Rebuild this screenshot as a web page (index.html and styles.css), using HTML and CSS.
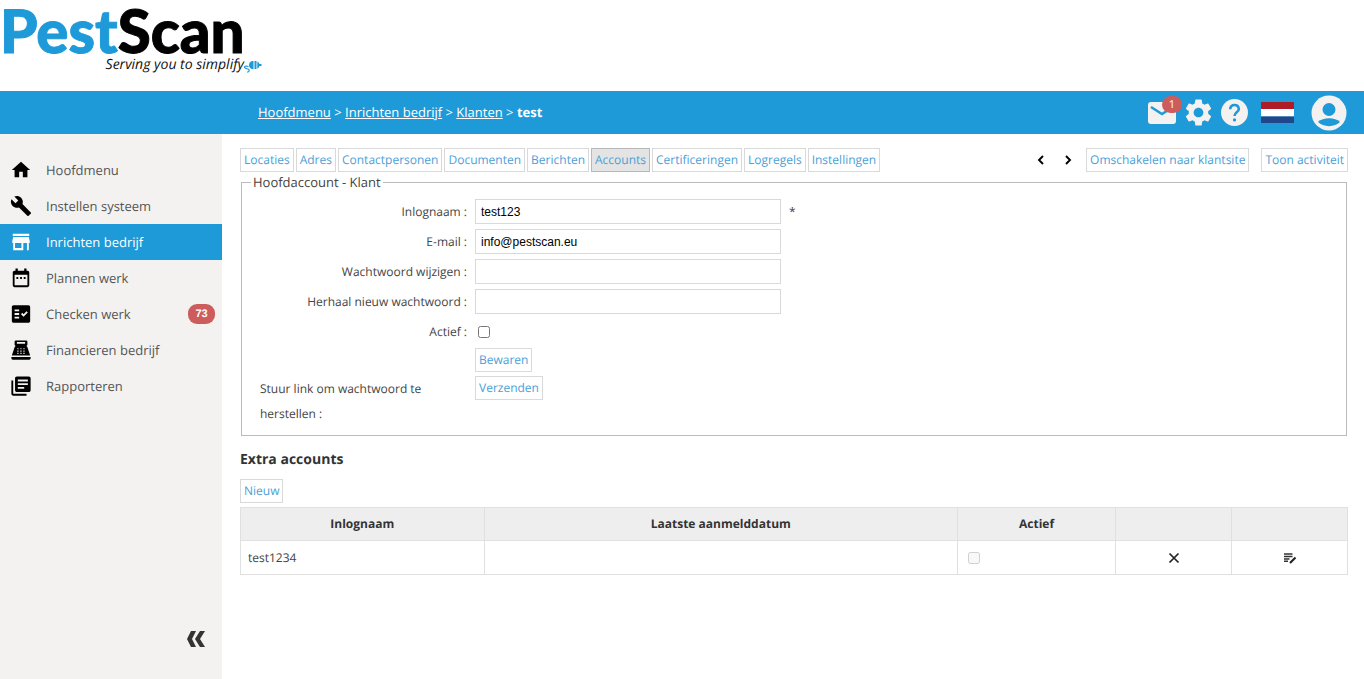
FILE: index.html
```html
<!DOCTYPE html>
<html lang="nl">
<head>
<meta charset="utf-8">
<title>PestScan - Accounts</title>
<link rel="stylesheet" href="styles.css">
</head>
<body>
<header class="masthead">
  <div class="logo">
    <div class="logo-name"><span class="logo-pest">Pest</span>Scan</div>
    <div class="logo-tagline">Serving you to simplify<svg class="plug" viewBox="0 0 18 14" width="18" height="14"><path d="M9.500 2H8Q5 3 5 6Q5 9 8 10H9.500ZM10.500 2h2v8h-2ZM13.300 2.500Q15 3 15.500 5h2v2h-2Q15 9 13.300 9.500Z" fill="#1e9ad9"/><path d="M4.500 7.500Q0 6.500 .7 8.700Q1.500 9.700 4 10Q6.500 11.500 4 13H3" fill="none" stroke="#1e9ad9" stroke-width="1.200"/></svg></div>
  </div>
</header>
<div class="topbar">
  <nav class="crumbs" aria-label="Kruimelpad"><a href="#">Hoofdmenu</a> &gt; <a href="#">Inrichten bedrijf</a> &gt; <a href="#">Klanten</a> &gt; <strong>test</strong></nav>
  <div class="tools">
    <button class="tool mail" aria-label="Berichten"><svg viewBox="0 0 28 22" width="28" height="22"><rect width="28" height="22" rx="3" fill="#f3f2f1"/><path d="M3 5l11 7 11-7" fill="none" stroke="#1e9ad9" stroke-width="2.400"/></svg><span class="mail-badge">1</span></button>
    <button class="tool gear" aria-label="Instellingen"><svg viewBox="2 2 20 20" width="27" height="27"><path fill="#f3f2f1" d="M19.14 12.94c.04-.3.06-.61.06-.94 0-.32-.02-.64-.07-.94l2.03-1.58c.18-.14.23-.41.12-.61l-1.92-3.32c-.12-.22-.37-.29-.59-.22l-2.39.96c-.5-.38-1.03-.7-1.62-.94l-.36-2.54c-.04-.24-.24-.41-.48-.41h-3.84c-.24 0-.43.17-.47.41l-.36 2.54c-.59.24-1.13.57-1.62.94l-2.39-.96c-.22-.08-.47 0-.59.22L2.74 8.87c-.12.21-.08.47.12.61l2.03 1.58c-.05.3-.09.63-.09.94s.02.64.07.94l-2.03 1.58c-.18.14-.23.41-.12.61l1.92 3.32c.12.22.37.29.59.22l2.39-.96c.5.38 1.03.7 1.62.94l.36 2.54c.05.24.24.41.48.41h3.84c.24 0 .44-.17.47-.41l.36-2.54c.59-.24 1.13-.56 1.62-.94l2.39.96c.22.08.47 0 .59-.22l1.92-3.32c.12-.22.07-.47-.12-.61l-2.01-1.58zM12 15.6c-1.98 0-3.6-1.62-3.6-3.6s1.62-3.6 3.6-3.6 3.6 1.62 3.6 3.6-1.62 3.6-3.6 3.6z"/></svg></button>
    <button class="tool help" aria-label="Help"><svg viewBox="2 2 20 20" width="27" height="27"><circle cx="12" cy="12" r="10" fill="#f3f2f1"/><path d="M8.800 9.600Q9 6.400 12 6.400T15.200 9.500C15.200 11.500 12 11.800 12 14.600" fill="none" stroke="#1e9ad9" stroke-width="1.900"/><circle cx="12" cy="17.500" r="1.200" fill="#1e9ad9"/></svg></button>
    <button class="tool flag" aria-label="Taal: Nederlands"><svg viewBox="0 0 33 21" width="33" height="21"><path d="M0 0h33v7H0z" fill="#ae1c28"/><path d="M0 7h33v7.500H0z" fill="#fff"/><path d="M0 14.500h33V21H0z" fill="#21468b"/></svg></button>
    <button class="tool" aria-label="Profiel"><svg viewBox="0 0 36 36" width="36" height="36"><circle cx="18" cy="18" r="17.500" fill="#f3f2f1"/><circle cx="18" cy="14.500" r="6.500" fill="#1e9ad9"/><path d="M7 27C12 22 24 22 29 27C24 32.500 12 32.500 7 27z" fill="#1e9ad9"/></svg></button>
  </div>
</div>
<div class="shell">
  <aside class="sidebar">
    <nav class="menu">
      <a class="item" href="#"><svg viewBox="0 0 24 24"><path d="M10 20v-6h4v6h5v-8h3L12 3 2 12h3v8z"/></svg>Hoofdmenu</a>
      <a class="item" href="#"><svg viewBox="0 0 24 24"><path d="M22.700 19l-9.100-9.100c.9-2.300.4-5-1.500-6.900-2-2-5-2.400-7.400-1.300L9 6 6 9 1.600 4.700C.4 7.100.9 10.100 2.900 12.100c1.900 1.900 4.600 2.400 6.900 1.500l9.100 9.100c.4.4 1 .4 1.400 0l2.300-2.300c.5-.4.5-1.100.1-1.400z"/></svg>Instellen systeem</a>
      <a class="item current" href="#"><svg viewBox="0 0 24 24"><path fill-rule="evenodd" d="M3 3h18v2.500H3zM21.500 13v-2L20.500 6.500H3.500L2.500 11v2h1v8h11v-8h4v8h2v-8zM12.500 18.500h-7V13h7z"/></svg>Inrichten bedrijf</a>
      <a class="item" href="#"><svg viewBox="0 0 24 24"><path d="M9 11H7v2h2v-2zm4 0h-2v2h2v-2zm4 0h-2v2h2v-2zM19 4h-1V1.500h-2.500V4h-7V1.500H6V4H5c-1.110 0-2 .9-2 2v14c0 1.100.89 2 2 2h14c1.100 0 2-.9 2-2V6c0-1.100-.9-2-2-2zm0 16H5V8.500h14V20z"/></svg>Plannen werk</a>
      <a class="item" href="#"><svg viewBox="0 0 24 24"><path fill-rule="evenodd" d="M20 2.500H4c-1.100 0-2 .9-2 2v15c0 1.100.9 2 2 2h16c1.100 0 2-.9 2-2v-15c0-1.100-.9-2-2-2zM10 17H5v-2h5v2zm0-4H5v-2h5v2zm0-4H5V7h5v2zm4.820 6L12 12.160l1.410-1.410 1.410 1.420L17.990 9l1.420 1.420L14.820 15z"/></svg>Checken werk<span class="count">73</span></a>
      <a class="item" href="#"><svg viewBox="0 0 24 24"><path fill-rule="evenodd" d="M6.500 1.500h11q1.500 0 1.500 1.500v3q0 1.500-1.500 1.500Q18.500 7.500 19 9L22 18H2L5 9Q5.500 7.500 6.500 7.500 5 7.500 5 6V3Q5 1.500 6.500 1.500zM7.500 3.300v2h9v-2zM8 10v1.300h1.300V10zM11.300 10v1.300h1.300V10zM14.600 10v1.300h1.300V10zM8 12.500v1.300h1.300v-1.300zM11.300 12.500v1.300h1.300v-1.300zM14.600 12.500v1.300h1.300v-1.300zM8 15v1.300h1.300V15zM11.300 15v1.300h1.300V15zM14.600 15v1.300h1.300V15zM1.500 19.500h21V21q0 1.500-1.500 1.500H3Q1.500 22.500 1.500 21z"/></svg>Financieren bedrijf</a>
      <a class="item" href="#"><svg viewBox="0 0 24 24"><path d="M3.500 6h-2v14.500c0 1.100.9 2 2 2H18v-2H3.500V6z"/><path fill-rule="evenodd" d="M20.500 1.500h-13c-1.100 0-2 .9-2 2v13c0 1.100.9 2 2 2h13c1.100 0 2-.9 2-2v-13c0-1.100-.9-2-2-2zM19.500 11h-11V9h11v2zm-4 4h-7v-2h7v2zm4-8h-11V5h11v2z"/></svg>Rapporteren</a>
    </nav>
    <button class="collapse" aria-label="Menu inklappen"><svg viewBox="0 0 20 18" width="20" height="18"><path d="M5 1h5L6 9l4 8H5L1 9zM14 1h5l-5 8 5 8h-5L9 9z" fill="#333"/></svg></button>
  </aside>
  <main class="content">
    <div class="toolbar">
      <nav class="tabs">
        <a class="btn" href="#">Locaties</a>
        <a class="btn" href="#">Adres</a>
        <a class="btn" href="#">Contactpersonen</a>
        <a class="btn" href="#">Documenten</a>
        <a class="btn" href="#">Berichten</a>
        <a class="btn active" href="#" aria-current="page">Accounts</a>
        <a class="btn" href="#">Certificeringen</a>
        <a class="btn" href="#">Logregels</a>
        <a class="btn" href="#">Instellingen</a>
      </nav>
      <div class="actions">
        <button class="arrow" aria-label="Vorige"><svg viewBox="0 0 8 10" width="8" height="10"><path d="M6 1L2 5l4 4" fill="none" stroke="#000" stroke-width="1.900"/></svg></button>
        <button class="arrow" aria-label="Volgende"><svg viewBox="0 0 8 10" width="8" height="10"><path d="M2 1l4 4-4 4" fill="none" stroke="#000" stroke-width="1.900"/></svg></button>
        <button class="btn">Omschakelen naar klantsite</button>
        <button class="btn">Toon activiteit</button>
      </div>
    </div>
    <fieldset class="account">
      <legend>Hoofdaccount - Klant</legend>
      <div class="field"><label for="login">Inlognaam :</label><input class="text" id="login" type="text" value="test123"><span class="required">*</span></div>
      <div class="field"><label for="email">E-mail :</label><input class="text" id="email" type="text" value="info@pestscan.eu"></div>
      <div class="field"><label for="pw">Wachtwoord wijzigen :</label><input class="text" id="pw" type="password"></div>
      <div class="field"><label for="pw2">Herhaal nieuw wachtwoord :</label><input class="text" id="pw2" type="password"></div>
      <div class="field last"><label for="active">Actief :</label><input class="check" id="active" type="checkbox"></div>
      <div class="field save"><button class="btn">Bewaren</button></div>
      <div class="field reset"><label for="send">Stuur link om wachtwoord te herstellen :</label><button class="btn" id="send">Verzenden</button></div>
    </fieldset>
    <h2 class="heading">Extra accounts</h2>
    <button class="btn">Nieuw</button>
    <table class="grid">
      <colgroup><col class="c-login"><col class="c-date"><col class="c-active"><col class="c-icon"><col class="c-icon"></colgroup>
      <thead><tr><th>Inlognaam</th><th>Laatste aanmelddatum</th><th>Actief</th><th></th><th></th></tr></thead>
      <tbody><tr>
        <td>test1234</td><td></td>
        <td><input class="check in-grid" type="checkbox" disabled aria-label="Actief"></td>
        <td class="icon"><button class="row-btn" aria-label="Verwijderen"><svg viewBox="0 0 14 14" width="14" height="14"><path d="M2.500 2.500l9 9M11.500 2.500l-9 9" fill="none" stroke="#222" stroke-width="1.700"/></svg></button></td>
        <td class="icon"><button class="row-btn" aria-label="Bewerken"><svg viewBox="0 0 14 14" width="14" height="14"><path d="M1 3h8.500M1 5.500h8.500M1 8h5.500M1 10.300h4" stroke="#333" stroke-width="1.400"/><path d="M7 12L12.500 6.500" stroke="#222" stroke-width="2.200"/></svg></button></td>
      </tr></tbody>
    </table>
  </main>
</div>
</body>
</html>
```
FILE: styles.css
```css
* { box-sizing: border-box; }
body {
  margin: 0;
  min-height: 100vh;
  display: flex;
  flex-direction: column;
  font: 12px/16px "Open Sans", "Noto Sans", sans-serif;
  text-rendering: geometricPrecision;
  color: #444;
  background: #fff;
}
button {
  font: inherit;
  text-rendering: inherit;
  margin: 0;
  padding: 0;
  border: 0;
  background: none;
  cursor: pointer;
}
svg { display: block; }

.masthead { height: 91px; padding-top: 3px; }
.logo { width: 262px; }
.logo-name {
  font: 900 60px/54px Lato, sans-serif;
  -webkit-text-stroke: 1px currentColor;
  color: #000;
  white-space: nowrap;
}
.logo-pest { color: #1e9ad9; }
.logo-tagline {
  display: flex;
  justify-content: flex-end;
  align-items: center;
  font: italic 14px/14px "Open Sans", sans-serif;
  color: #111;
  white-space: nowrap;
}
.plug { margin-top: 2px; }

.topbar {
  display: flex;
  justify-content: space-between;
  align-items: center;
  height: 43px;
  padding: 0 17px 0 258px;
  background: #1e9ad9;
  color: #fff;
  font-size: 13px;
}
.crumbs { padding-bottom: 1px; }
.crumbs a { color: #fff; text-decoration: underline; }
.tools { display: flex; align-items: center; gap: 9px; }
.tool { position: relative; }
.flag { margin: 0 8px 0 4px; }
.mail-badge {
  position: absolute;
  top: -6px;
  right: -6px;
  width: 20px;
  height: 17px;
  border-radius: 9px;
  background: #cd5c5c;
  color: #fff;
  font: 11px/17px "Open Sans", sans-serif;
  text-align: center;
}

.shell { flex: 1; display: flex; }
.sidebar {
  flex: none;
  width: 222px;
  padding: 18px 0 31px;
  display: flex;
  flex-direction: column;
  justify-content: space-between;
  background: #f3f2f1;
}
.item {
  display: flex;
  align-items: center;
  gap: 14px;
  height: 36px;
  padding: 0 7px 0 10px;
  font-size: 13px;
  color: #555;
  text-decoration: none;
}
.item svg { width: 22px; height: 22px; fill: #000; }
.item.current { background: #1e9ad9; color: #fff; }
.item.current svg { fill: #fff; }
.count {
  margin-left: auto;
  width: 27px;
  border-radius: 9px;
  background: #cd5c5c;
  color: #fff;
  font: bold 11px/20px "Liberation Sans", Arial, sans-serif;
  text-align: center;
}
.collapse { align-self: flex-end; margin-right: 16px; }

.content { flex: 1; min-width: 0; padding: 14px 16px 0 18px; }
.toolbar { display: flex; justify-content: space-between; }
.tabs { display: flex; gap: 2px; }
.actions { display: flex; align-items: center; }
.actions .btn + .btn { margin-left: 12px; }
.arrow { margin-right: 19px; }
.arrow + .btn { margin-left: -5px; }
.btn {
  display: inline-block;
  height: 24px;
  padding: 0 3px;
  border: 1px solid #d9d9d9;
  background: #fff;
  color: #4a9fd8;
  line-height: 22px;
  text-decoration: none;
  white-space: nowrap;
}
.btn.active { background: #e4e4e4; border-color: #b8b8b8; }

.account {
  margin: 1px 1px 0;
  padding: 8px 18px 9px;
  border: 1px solid #bbb;
}
.account legend {
  margin-left: -9px;
  padding: 0 2px;
  font-size: 13px;
  line-height: 18px;
}
.field {
  display: flex;
  align-items: center;
  height: 25px;
  margin-bottom: 5px;
}
.field label {
  flex: none;
  width: 207px;
  margin-right: 8px;
  text-align: right;
  line-height: 25px;
}
.text {
  width: 306px;
  height: 25px;
  padding: 0 5px;
  border: 1px solid #d9d9d9;
  background: #fff;
  color: #000;
  font: 12px "Liberation Sans", Arial, sans-serif;
}
.required { margin-left: 8px; }
.check { width: 12px; height: 12px; margin: 0 3px; }
.in-grid { display: block; }
.last { margin-bottom: 3px; }
.save { margin-bottom: 4px; padding-left: 215px; }
.reset { align-items: flex-start; height: auto; margin: 0; }
.reset label { padding-right: 40px; text-align: left; }

.heading { margin: 15px 0 10px; font-size: 14px; line-height: 18px; color: #333; }
.grid {
  width: 100%;
  margin-top: 4px;
  border-collapse: collapse;
  table-layout: fixed;
}
.c-login { width: 22%; }
.c-active { width: 158px; }
.c-icon { width: 116px; }
.grid th, .grid td {
  height: 34px;
  padding: 0 7px;
  border: 1px solid #e0e0e0;
  text-align: left;
}
.grid th { height: 33px; background: #eee; color: #333; text-align: center; }
.grid .icon { text-align: center; }
.row-btn { display: inline-block; vertical-align: middle; }
```
